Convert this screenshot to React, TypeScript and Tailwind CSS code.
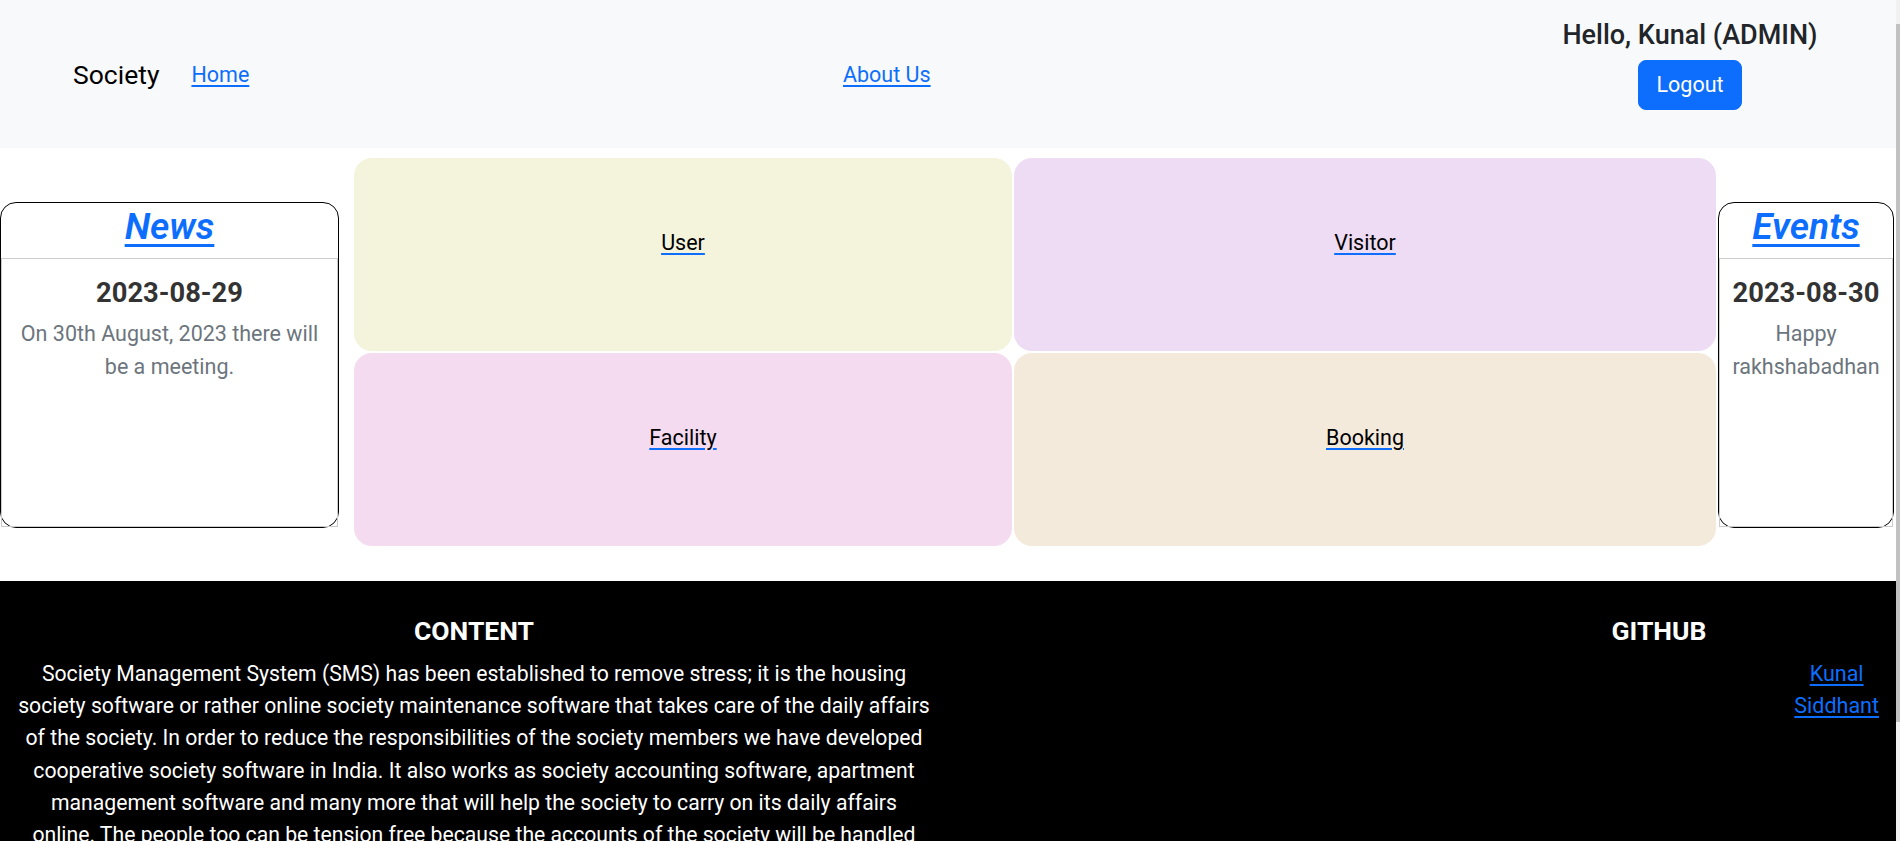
import React from 'react';

const tiles = [
  { label: 'User', bg: 'bg-[#f4f4dc]' },
  { label: 'Visitor', bg: 'bg-[#eedcf4]' },
  { label: 'Facility', bg: 'bg-[#f4dbf0]' },
  { label: 'Booking', bg: 'bg-[#f4eadc]' },
];

const SideCard: React.FC<{ title: string; date: string; text: string; width: string }> = ({ title, date, text, width }) => (
  <div className={`${width} mt-[44px] shrink-0 rounded-[16px] border border-black`}>
    <div className="flex h-[55px] items-center justify-center pb-[8px]">
      <a href="#" className="text-[37px] font-semibold italic leading-none text-[#0d6efd] underline underline-offset-[5px]">
        {title}
      </a>
    </div>
    <div className="h-[269px] border border-[#cccccc] px-[10px] pt-[18px] text-center">
      <h5 className="text-[27.3px] font-bold leading-[1.2] text-[#333333]">{date}</h5>
      <p className="mt-[7px] text-[21.5px] leading-[33px] text-[#6c757d]">{text}</p>
    </div>
  </div>
);

export default function App() {
  return (
    <div className="flex h-[841px] w-full overflow-hidden bg-white font-['Roboto',sans-serif] text-[#212529]">
      <div className="flex min-w-0 flex-1 flex-col">
        {/* navbar */}
        <nav className="flex h-[148px] shrink-0 items-center bg-[#f8f9fa]">
          <div className="flex w-[843px] items-center pl-[73px] pt-[2px]">
            <span className="text-[26.5px] leading-none text-black">Society</span>
            <a href="#" className="ml-[32px] text-[21.5px] text-[#0d6efd] underline underline-offset-[3px]">Home</a>
          </div>
          <a href="#" className="pt-[2px] text-[21.5px] text-[#0d6efd] underline underline-offset-[3px]">About Us</a>
          <div className="mr-[56px] ml-auto flex w-[300px] flex-col items-center self-start pt-[19px]">
            <h5 className="text-[27px] font-medium leading-[1.2] text-[#212529]">Hello, Kunal (ADMIN)</h5>
            <button className="mt-[9px] h-[50px] rounded-[8px] border border-[#0d6efd] bg-[#0d6efd] px-[17px] text-[21.5px] text-white">
              Logout
            </button>
          </div>
        </nav>

        {/* dashboard */}
        <section className="flex shrink-0 items-start pt-[10px] pb-[35px]">
          <SideCard
            width="w-[339px]"
            title="News"
            date="2023-08-29"
            text="On 30th August, 2023 there will be a meeting."
          />
          <div className="ml-[15px] grid w-[1362px] shrink-0 grid-cols-[658px_702px] gap-[2px]">
            {tiles.map((t) => (
              <div key={t.label} className={`flex h-[193px] items-center justify-center rounded-[18px] ${t.bg}`}>
                <a href="#" className="mb-[23px] text-[21.5px] text-[#0d6efd] underline underline-offset-[3px]">
                  <span className="text-black">{t.label}</span>
                </a>
              </div>
            ))}
          </div>
          <div className="ml-[2px]">
            <SideCard width="w-[176px]" title="Events" date="2023-08-30" text="Happy rakhshabadhan" />
          </div>
        </section>

        {/* footer */}
        <footer className="grid shrink-0 grid-cols-4 bg-black pt-[34px] pb-[40px] text-white">
          <div className="col-span-2 px-[12px] text-center">
            <h5 className="mb-[11px] text-[26.5px] font-bold leading-[1.2]">CONTENT</h5>
            <p className="text-[21.2px] leading-[32.25px]">
              Society Management System (SMS) has been established to remove stress; it is the housing society
              software or rather online society maintenance software that takes care of the daily affairs of the
              society. In order to reduce the responsibilities of the society members we have developed cooperative
              society software in India. It also works as society accounting software, apartment management software
              and many more that will help the society to carry on its daily affairs
              <br />
              online. The people too can be tension free because the accounts of the society will be handled
              properly.
            </p>
          </div>
          <div />
          <div className="px-[16px]">
            <h5 className="mb-[11px] text-center text-[26.5px] font-bold leading-[1.2]">GITHUB</h5>
            <div className="flex justify-end pr-[1px]">
              <div className="flex flex-col items-center text-[21.5px] leading-[32.25px]">
                <a href="#" className="text-[#0d6efd] underline underline-offset-[3px]">Kunal</a>
                <a href="#" className="text-[#0d6efd] underline underline-offset-[3px]">Siddhant</a>
              </div>
            </div>
          </div>
        </footer>
      </div>

      {/* thin scrollbar */}
      <div className="flex w-[4px] shrink-0 flex-col bg-[#f1f1f1]">
        <div className="mt-[24px] h-[698px] bg-[#c1c1c1]" />
      </div>
    </div>
  );
}
